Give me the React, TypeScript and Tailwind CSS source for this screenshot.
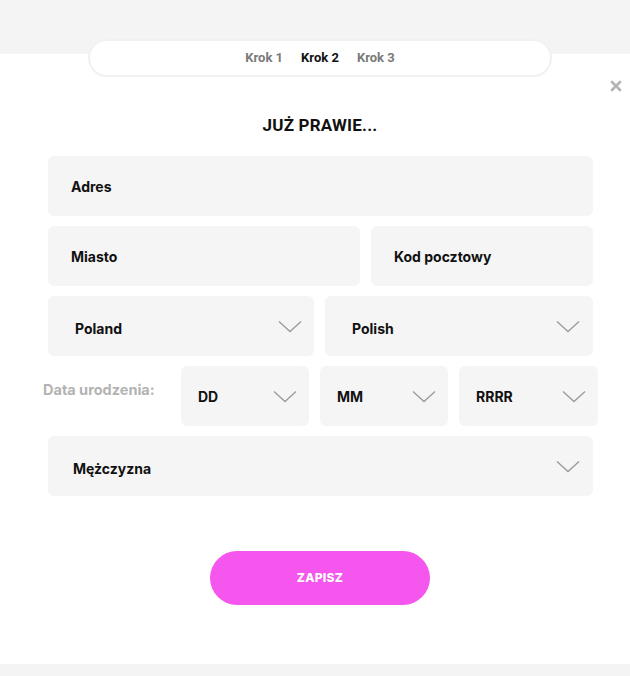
import { X } from 'lucide-react'

const fieldFont = { fontFamily: 'Inter, "Noto Sans", sans-serif' }

function Chevron() {
  return (
    <svg width="24" height="13" viewBox="0 0 24 13" fill="none" className="shrink-0">
      <path d="M1 1.5 L12 11.5 L23 1.5" stroke="#9a9a9a" strokeWidth="1.3" />
    </svg>
  )
}

function Input({ label, className = '' }: { label: string; className?: string }) {
  return (
    <div className={`h-[60px] bg-[#f5f5f5] rounded-md flex items-center pl-[23px] text-[14px] font-bold text-[#111] ${className}`} style={fieldFont}>
      {label}
    </div>
  )
}

function Select({ label, pl = 'pl-[27px]', pr = 'pr-[12px]', pt = 'pt-[5px]', className = '' }: { label: string; pl?: string; pr?: string; pt?: string; className?: string }) {
  return (
    <div className={`h-[60px] bg-[#f5f5f5] rounded-md flex items-center justify-between ${pl} ${pr} ${className}`} style={fieldFont}>
      <span className={`text-[14px] font-bold text-[#111] ${pt}`}>{label}</span>
      <Chevron />
    </div>
  )
}

export default function App() {
  return (
    <div className="h-[676px] w-[630px] flex flex-col bg-white overflow-hidden">
      <div className="h-[54px] bg-[#f4f4f4] shrink-0" />

      <div className="flex-1 relative flex flex-col">
        {/* Steps */}
        <div className="ml-[88px] -mt-[15px] w-[464px] h-[38px] rounded-full bg-white border-2 border-[#f1f1f1] flex items-center justify-center gap-[18px] text-[13px] font-bold" style={{ fontFamily: 'Roboto, sans-serif' }}>
          <span className="text-[#7a7a7a]">Krok 1</span>
          <span className="text-[#111]">Krok 2</span>
          <span className="text-[#7a7a7a]">Krok 3</span>
        </div>

        <button className="absolute right-[6px] top-[24px] text-[#b4b4b4]">
          <X size={16} strokeWidth={4} />
        </button>

        <h1 className="mt-[38px] ml-[88px] w-[464px] text-center text-[17px] leading-[20px] font-bold text-[#111] tracking-[0.2px]" style={{ fontFamily: 'Roboto, sans-serif' }}>
          JUŻ PRAWIE...
        </h1>

        <div className="mt-[21px] ml-[48px] w-[545px] flex flex-col gap-[10px]">
          <Input label="Adres" />
          <div className="flex gap-[11px]">
            <Input label="Miasto" className="w-[312px]" />
            <Input label="Kod pocztowy" className="flex-1" />
          </div>
          <div className="flex gap-[11px]">
            <Select label="Poland" className="w-[266px]" />
            <Select label="Polish" className="flex-1" pr="pr-[13px]" />
          </div>
          <div className="flex items-center -ml-[5px] w-[555px]">
            <span className="w-[138px] text-[14.5px] font-bold text-[#b3b3b3] -mt-[13px]" style={fieldFont}>
              Data urodzenia:
            </span>
            <div className="flex gap-[11px]">
              <Select label="DD" pl="pl-[17px]" pt="pt-0" className="w-[128px]" />
              <Select label="MM" pl="pl-[17px]" pt="pt-0" className="w-[128px]" />
              <Select label="RRRR" pl="pl-[17px]" pt="pt-0" className="w-[139px]" />
            </div>
          </div>
          <Select label="Mężczyzna" pl="pl-[25px]" pr="pr-[13px]" />
        </div>

        <button className="mt-[55px] ml-[210px] w-[220px] h-[54px] rounded-full bg-[#f556ed] text-white text-[12px] font-extrabold tracking-wide" style={fieldFont}>
          ZAPISZ
        </button>
      </div>

      <div className="h-[12px] bg-[#f4f4f4] shrink-0" />
    </div>
  )
}
